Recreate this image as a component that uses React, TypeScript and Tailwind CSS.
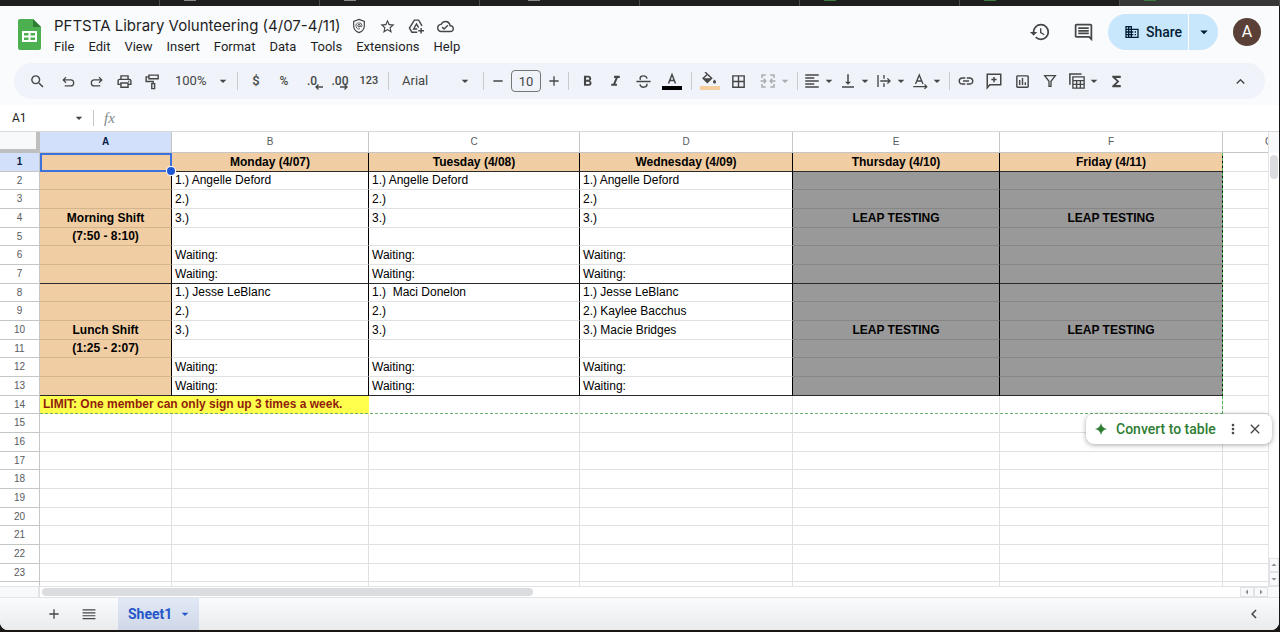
import type { ReactNode } from 'react';
import {
  MdAdd,
  MdArrowDropDown,
  MdArrowLeft,
  MdArrowRight,
  MdArrowDropUp,
  MdBorderAll,
  MdClose,
  MdDomain,
  MdFormatAlignLeft,
  MdFormatBold,
  MdFormatItalic,
  MdFunctions,
  MdHistory,
  MdKeyboardArrowLeft,
  MdKeyboardArrowUp,
  MdLink,
  MdMoreVert,
  MdOutlineCloudDone,
  MdOutlineInsertComment,
  MdOutlineInsertChart,
  MdOutlinePrint,
  MdRemove,
  MdSearch,
  MdStarBorder,
  MdVerticalAlignBottom,
} from 'react-icons/md';

const tabs = [
  { tone: '', mark: '' },
  { tone: '', mark: 'ml-6 bg-[#8a8a8a]' },
  { tone: '', mark: 'ml-6 bg-[#8a8a8a]' },
  { tone: '', mark: 'ml-12 bg-[#8a8a8a]' },
  { tone: '', mark: '' },
  { tone: '', mark: 'ml-6 bg-[#3c7a40]' },
  { tone: '', mark: 'ml-6 bg-[#3c7a40]' },
  { tone: 'bg-[#373737]', mark: 'ml-6 bg-[#3c7a40]' },
];

const menus = ['File', 'Edit', 'View', 'Insert', 'Format', 'Data', 'Tools', 'Extensions', 'Help'];

const columns = [
  { id: 'A', width: 'w-[132px]' },
  { id: 'B', width: 'w-[197px]' },
  { id: 'C', width: 'w-[211px]' },
  { id: 'D', width: 'w-[213px]' },
  { id: 'E', width: 'w-[207px]' },
  { id: 'F', width: 'w-[223px]' },
  { id: 'G', width: 'w-[93px]' },
];

const cells: string[][] = [
  ['', 'Monday (4/07)', 'Tuesday (4/08)', 'Wednesday (4/09)', 'Thursday (4/10)', 'Friday (4/11)', ''],
  ['', '1.) Angelle Deford', '1.) Angelle Deford', '1.) Angelle Deford', '', '', ''],
  ['', '2.)', '2.)', '2.)', '', '', ''],
  ['Morning Shift', '3.)', '3.)', '3.)', 'LEAP TESTING', 'LEAP TESTING', ''],
  ['(7:50 - 8:10)', '', '', '', '', '', ''],
  ['', 'Waiting:', 'Waiting:', 'Waiting:', '', '', ''],
  ['', 'Waiting:', 'Waiting:', 'Waiting:', '', '', ''],
  ['', '1.) Jesse LeBlanc', '1.)  Maci Donelon', '1.) Jesse LeBlanc', '', '', ''],
  ['', '2.)', '2.)', '2.) Kaylee Bacchus', '', '', ''],
  ['Lunch Shift', '3.)', '3.)', '3.) Macie Bridges', 'LEAP TESTING', 'LEAP TESTING', ''],
  ['(1:25 - 2:07)', '', '', '', '', '', ''],
  ['', 'Waiting:', 'Waiting:', 'Waiting:', '', '', ''],
  ['', 'Waiting:', 'Waiting:', 'Waiting:', '', '', ''],
  ['LIMIT: One member can only sign up 3 times a week.', '', '', '', '', '', ''],
];

const rowNumbers = Array.from({ length: 23 }, (_, i) => i + 1);

function Svg({ children, size = 'size-[18px]' }: { children: ReactNode; size?: string }) {
  return (
    <svg viewBox="0 0 24 24" className={size} fill="none" stroke="currentColor" strokeWidth="2" aria-hidden="true">
      {children}
    </svg>
  );
}

function Tool({ label, width = 'w-7', children }: { label: string; width?: string; children: ReactNode }) {
  return (
    <button type="button" aria-label={label} className={`flex h-7 shrink-0 items-center justify-center ${width}`}>
      {children}
    </button>
  );
}

function Combo({ label, muted, children }: { label: string; muted?: boolean; children: ReactNode }) {
  return (
    <button
      type="button"
      aria-label={label}
      className={`flex h-7 w-[34px] shrink-0 items-center ${muted ? 'text-[#a9acb0]' : ''}`}
    >
      {children}
      <MdArrowDropDown className="size-4 shrink-0" />
    </button>
  );
}

function Divider() {
  return <span className="mx-1 h-[18px] w-px shrink-0 bg-[#c7cacf]" />;
}

function BrowserStrip() {
  return (
    <div className="flex h-1.5 shrink-0 bg-[#1e1e1e]">
      {tabs.map((tab, i) => (
        <div key={i} className={`flex-1 border-r border-[#4a4a4a] ${tab.tone}`}>
          {tab.mark && <div className={`h-px w-3 ${tab.mark}`} />}
        </div>
      ))}
    </div>
  );
}

function Header() {
  return (
    <header className="flex h-[57px] shrink-0 items-start px-[18px]">
      <svg viewBox="0 0 23 31" className="mt-[13px] h-[31px] w-[23px] shrink-0" aria-hidden="true">
        <path d="M2 0h13l8 8v21a2 2 0 0 1-2 2H2a2 2 0 0 1-2-2V2a2 2 0 0 1 2-2z" fill="#4caf50" />
        <path d="M15 0l8 8h-8z" fill="#2e7d32" />
        <path
          d="M4 12h15v11H4zM6 14v2.600h4.500V14zM12.500 14v2.600H17V14zM6 18.400V21h4.500v-2.600zM12.500 18.400V21H17v-2.600z"
          fill="#fff"
          fillRule="evenodd"
        />
      </svg>
      <div className="ml-[13px] flex flex-col pt-2">
        <div className="flex h-6 items-center">
          <h1 className="w-[282px] font-[Inter,sans-serif] text-[15px] leading-6 whitespace-nowrap text-[#1f1f1f]">
            PFTSTA Library Volunteering (4/07-4/11)
          </h1>
          <div className="ml-[15px] flex items-center gap-3 text-[#444746]">
            <button type="button" aria-label="Confidentiality">
              <Svg size="size-4">
                <path d="M12 2l8 3v6.500c0 5-3.400 8.800-8 10.500-4.600-1.700-8-5.500-8-10.500V5z" strokeWidth="1.800" />
                <circle cx="12" cy="11.500" r="1.800" strokeWidth="1.500" />
                <path d="M13.800 11.500c0 2.400 2.700 2.200 2.700 0A4.500 4.500 0 1 0 13.500 16" strokeWidth="1.300" />
              </Svg>
            </button>
            <button type="button" aria-label="Star">
              <MdStarBorder className="size-[17px]" />
            </button>
            <button type="button" aria-label="Add to Drive">
              <Svg size="size-[17px]">
                <path d="M13 20H5.500L2 14.200 9 3h6l4.800 8" />
                <path d="M13 15.500H8L12 8.500l3 5M18.500 14v8M14.500 18h8" />
              </Svg>
            </button>
            <button type="button" aria-label="Saved to Drive">
              <MdOutlineCloudDone className="size-[17px]" />
            </button>
          </div>
        </div>
        <nav className="flex h-[17px] items-center gap-[14px] text-[13px] leading-4 text-[#1f1f1f]">
          {menus.map((m) => (
            <button key={m} type="button">
              {m}
            </button>
          ))}
        </nav>
      </div>
      <div className="ml-auto flex items-center pt-2 text-[#444746]">
        <button type="button" aria-label="Version history">
          <MdHistory className="size-[22px]" />
        </button>
        <button type="button" aria-label="Comments" className="ml-[22px]">
          <MdOutlineInsertComment className="size-[21px]" />
        </button>
        <div className="ml-[14px] flex h-9 overflow-hidden rounded-full bg-[#c8e6fc] text-[#001d35]">
          <button type="button" className="flex w-20 items-center gap-1.5 pl-4 text-[14px] font-medium">
            <MdDomain className="size-4" />
            Share
          </button>
          <button
            type="button"
            aria-label="Sharing options"
            className="flex w-[30px] items-center justify-center border-l border-white"
          >
            <MdArrowDropDown className="size-[18px]" />
          </button>
        </div>
        <button
          type="button"
          aria-label="Account"
          className="ml-[15px] flex size-7 items-center justify-center rounded-full bg-[#5b4037] text-[16px] text-white"
        >
          A
        </button>
      </div>
    </header>
  );
}

function Toolbar() {
  return (
    <div className="mx-[14px] flex h-9 shrink-0 items-center rounded-full bg-[#f0f3f9] pr-[11px] pl-[9px] text-[#444746]">
      <Tool label="Search the menus">
        <MdSearch className="size-[17px]" />
      </Tool>
      <div className="ml-[3px] flex">
        <Tool label="Undo">
          <Svg size="size-[15px]">
            <path d="M8 5L3.500 9.500 8 14M4 9.500h11.500a4.800 4.800 0 0 1 0 9.600H6" />
          </Svg>
        </Tool>
        <Tool label="Redo">
          <Svg size="size-[15px]">
            <path d="M16 5l4.500 4.500L16 14M20 9.500H8.500a4.800 4.800 0 0 0 0 9.600H18" />
          </Svg>
        </Tool>
        <Tool label="Print">
          <MdOutlinePrint className="size-[17px]" />
        </Tool>
        <Tool label="Paint format">
          <Svg size="size-[17px]">
            <path d="M7 3h13v5H7zM7 5.500H3V12h10v3M11 15h4v7h-4z" />
          </Svg>
        </Tool>
      </div>
      <button type="button" className="flex h-7 w-[67px] shrink-0 items-center justify-between pr-0.5 pl-[9px] text-[13px]">
        100%
        <MdArrowDropDown className="size-4" />
      </button>
      <Divider />
      <Tool label="Format as currency">
        <span className="text-[13px] font-medium">$</span>
      </Tool>
      <Tool label="Format as percent">
        <span className="text-[12px] font-medium">%</span>
      </Tool>
      <Tool label="Decrease decimal places">
        <span className="relative text-[12px] font-medium">
          .0
          <svg viewBox="0 0 8 6" className="absolute top-3 left-2 h-1.5 w-2" fill="none" stroke="currentColor" strokeWidth="1.300">
            <path d="M8 3H1M3.500 .5L1 3l2.500 2.500" />
          </svg>
        </span>
      </Tool>
      <Tool label="Increase decimal places">
        <span className="relative text-[12px] font-medium">
          .00
          <svg viewBox="0 0 8 6" className="absolute top-3 left-2 h-1.5 w-2" fill="none" stroke="currentColor" strokeWidth="1.300">
            <path d="M0 3h7M4.500 .5L7 3 4.500 5.500" />
          </svg>
        </span>
      </Tool>
      <Tool label="More formats" width="w-[30px]">
        <span className="text-[11px] font-medium">123</span>
      </Tool>
      <Divider />
      <button type="button" className="flex h-7 w-[86px] shrink-0 items-center justify-between pr-1.5 pl-[9px] text-[13px]">
        Arial
        <MdArrowDropDown className="size-4" />
      </button>
      <Divider />
      <Tool label="Decrease font size" width="w-5">
        <MdRemove className="size-4" />
      </Tool>
      <input
        aria-label="Font size"
        defaultValue="10"
        className="mx-[3px] h-[22px] w-[30px] shrink-0 rounded border border-[#747775] bg-transparent text-center text-[13px]"
      />
      <Tool label="Increase font size" width="w-5">
        <MdAdd className="size-4" />
      </Tool>
      <Divider />
      <Tool label="Bold">
        <MdFormatBold className="size-[17px]" />
      </Tool>
      <Tool label="Italic">
        <MdFormatItalic className="size-[17px]" />
      </Tool>
      <Tool label="Strikethrough">
        <Svg size="size-[17px]">
          <path d="M2 12h20M17 8c-.5-2.500-2.300-4-5-4-2.900 0-4.800 1.500-4.800 3.600 0 .8.300 1.400.8 1.900M7 16c.5 2.500 2.300 4 5 4 2.900 0 4.900-1.500 4.900-3.600 0-.5-.1-.9-.3-1.300" />
        </Svg>
      </Tool>
      <Tool label="Text color" width="w-[30px]">
        <svg viewBox="0 0 20 18" className="h-[18px] w-5" aria-hidden="true">
          <path d="M6.500 11.500L10 2.500l3.500 9M7.800 8.500h4.400" fill="none" stroke="currentColor" strokeWidth="1.500" />
          <path d="M0 14h20v4H0z" fill="#000" />
        </svg>
      </Tool>
      <Divider />
      <Tool label="Fill color">
        <svg viewBox="0 0 20 18" className="h-[18px] w-5" aria-hidden="true">
          <path d="M5 0l6.700 6.200-4.400 4.400-4.200-4.300L7.500 2.300" fill="none" stroke="currentColor" strokeWidth="1.400" />
          <path d="M3.200 6.300h8.400l-4.300 4.300z" fill="currentColor" />
          <path d="M14.500 7.500c1 1.200 1.500 1.900 1.500 2.500a1.500 1.500 0 0 1-3 0c0-.6.500-1.300 1.500-2.500z" fill="currentColor" />
          <path d="M0 14h20v4H0z" fill="#f6ce9d" />
        </svg>
      </Tool>
      <Tool label="Borders">
        <MdBorderAll className="size-[17px]" />
      </Tool>
      <div className="ml-[7px] flex">
        <Combo label="Merge cells" muted>
          <Svg>
            <path d="M9 4H4v4M4 16v4h5M15 4h5v4M20 16v4h-5M2 12h7M6.500 9L9 12l-2.500 3M22 12h-7M17.500 9L15 12l2.500 3" />
          </Svg>
        </Combo>
      </div>
      <Divider />
      <div className="ml-px flex gap-0.5">
        <Combo label="Horizontal align">
          <MdFormatAlignLeft className="size-[18px]" />
        </Combo>
        <Combo label="Vertical align">
          <MdVerticalAlignBottom className="size-[18px]" />
        </Combo>
        <Combo label="Text wrapping">
          <Svg>
            <path d="M4 4v16M12 4v5M12 15v5M7 12h13M16.500 8.500L20 12l-3.500 3.500" strokeWidth="1.800" />
          </Svg>
        </Combo>
        <Combo label="Text rotation">
          <Svg>
            <path d="M6 16l5-12 5 12M8 12h6M3 19.500h17M18 16.500l3 3-3 3" strokeWidth="1.800" />
          </Svg>
        </Combo>
      </div>
      <Divider />
      <div className="flex gap-1">
        <Tool label="Insert link" width="w-6">
          <MdLink className="size-[18px]" />
        </Tool>
        <Tool label="Insert comment" width="w-6">
          <Svg>
            <path d="M3 21V3h18v14H6.500zM12 6.500v7M8.500 10h7" />
          </Svg>
        </Tool>
        <Tool label="Insert chart" width="w-6">
          <MdOutlineInsertChart className="size-[17px]" />
        </Tool>
        <Tool label="Create a filter" width="w-6">
          <Svg size="size-4">
            <path d="M4 4h16l-6.500 8.500V20h-3v-7.500z" />
          </Svg>
        </Tool>
      </div>
      <div className="ml-1.5 flex">
        <Combo label="Table views">
          <Svg>
            <path d="M2.500 17V2.500H18" />
            <path d="M6.500 6.500h15v15h-15zM6.500 11.500h15M6.500 16.500h15M11.500 11.500v10M16.500 11.500v10" strokeWidth="1.800" />
          </Svg>
        </Combo>
      </div>
      <div className="ml-0.5 flex">
        <Tool label="Functions" width="w-6">
          <MdFunctions className="size-[17px]" />
        </Tool>
      </div>
      <div className="ml-auto">
        <Tool label="Hide the menus">
          <MdKeyboardArrowUp className="size-[17px]" />
        </Tool>
      </div>
    </div>
  );
}

function FormulaBar() {
  return (
    <div className="mt-1.5 flex h-[27px] shrink-0 items-center border-b border-[#d5d7da] bg-white text-[#1f1f1f]">
      <input aria-label="Name box" defaultValue="A1" className="w-[60px] bg-transparent pl-3 text-[12px]" />
      <button type="button" aria-label="Named ranges" className="ml-[11px] text-[#444746]">
        <MdArrowDropDown className="size-4" />
      </button>
      <span className="ml-1.5 h-4 w-px bg-[#c7c7c7]" />
      <span className="ml-2.5 font-['Liberation_Serif',serif] text-[15px] text-[#80868b] italic">fx</span>
      <input aria-label="Formula" className="ml-2 h-5 min-w-0 flex-1 bg-transparent text-[12px] outline-none" />
    </div>
  );
}

function cellStyle(row: number, col: number) {
  const inTable = row <= 13 && col <= 5;
  const classes = ['relative whitespace-pre border-r border-b px-[3px] py-0 leading-[17px]'];

  if (row === 14 && col === 0) classes.push('bg-[#ffff4d] font-bold text-[#8f1d0c]');
  else if (inTable && (row === 1 || col === 0)) classes.push('bg-[#f0cda2] text-center font-bold');
  else if (inTable && col >= 4) classes.push('bg-[#999999] text-center font-bold');

  if (inTable) classes.push('border-r-black');
  else if (row === 14 && col === 0) classes.push('border-r-transparent');
  else classes.push('border-r-black/12');

  if (inTable && (row === 1 || row === 7 || row === 13)) classes.push('border-b-[#2b2b2b]');
  else if (row === 14 && col <= 5) classes.push('border-b-transparent');
  else classes.push('border-b-black/12');

  return classes.join(' ');
}

function Grid() {
  return (
    <table className="w-[1316px] table-fixed border-separate border-spacing-0 font-['Liberation_Sans',Arial,sans-serif] text-[12px] text-black">
      <thead>
        <tr className="h-[21px]">
          <th className="w-10 border-r-4 border-b-4 border-[#bfbfbf] bg-[#f8f9fa] p-0" aria-label="Select all" />
          {columns.map((c) => (
            <th
              key={c.id}
              scope="col"
              className={`${c.width} border-r border-b border-[#c4c7c5] p-0 text-[10px] leading-4 ${
                c.id === 'A' ? 'bg-[#d3e0fb] font-bold text-[#041e49]' : 'bg-white font-normal text-[#575b5f]'
              }`}
            >
              {c.id}
            </th>
          ))}
        </tr>
      </thead>
      <tbody>
        {rowNumbers.map((n) => (
          <tr key={n} className={n % 3 === 2 ? 'h-[18px]' : 'h-[19px]'}>
            <th
              scope="row"
              className={`border-r border-b border-[#c4c7c5] p-0 text-[10px] leading-4 ${
                n === 1 ? 'bg-[#d3e0fb] font-bold text-[#041e49]' : 'bg-white font-normal text-[#575b5f]'
              }`}
            >
              {n}
            </th>
            {columns.map((c, col) => {
              // the note in A14 runs over B14
              if (n === 14 && col === 1) return null;
              return (
                <td key={c.id} colSpan={n === 14 && col === 0 ? 2 : 1} className={cellStyle(n, col)}>
                  {cells[n - 1]?.[col]}
                  {n === 1 && col === 0 && (
                    <span className="absolute top-0 -right-px -bottom-px left-0 z-10 border-2 border-[#3b70dd]">
                      <span className="absolute -right-[5px] -bottom-[5px] size-2 rounded-full bg-[#1a56d6] ring-1 ring-white" />
                    </span>
                  )}
                  {n === 1 && col === 5 && (
                    <span className="absolute top-0 -right-px z-10 h-[261px] w-px border-r border-dashed border-[#4caf50]" />
                  )}
                  {n === 14 && col === 0 && (
                    <span className="absolute -bottom-px left-0 z-10 w-[1183px] border-b border-dashed border-[#6db272]" />
                  )}
                </td>
              );
            })}
          </tr>
        ))}
        <tr className="h-[19px]">
          <td className="border-r border-[#c4c7c5]" />
          {columns.map((c) => (
            <td key={c.id} className="border-r border-black/12" />
          ))}
        </tr>
      </tbody>
    </table>
  );
}

function ConvertChip() {
  return (
    <div className="absolute top-[282px] right-[7px] z-20 flex h-[30px] w-[186px] items-center rounded-lg bg-white pl-2 shadow-[0_1px_5px_rgba(0,0,0,0.35)]">
      <button type="button" className="flex items-center gap-2 text-[14px] font-medium whitespace-nowrap text-[#2e7d32]">
        <svg viewBox="0 0 14 14" className="size-[14px]" fill="currentColor" aria-hidden="true">
          <path d="M7 1c.7 3.600 2.400 5.300 6 6-3.600.7-5.300 2.400-6 6-.7-3.600-2.400-5.300-6-6 3.600-.7 5.300-2.400 6-6z" />
        </svg>
        Convert to table
      </button>
      <div className="ml-auto flex items-center gap-1.5 pr-[9px] text-[#444746]">
        <button type="button" aria-label="More options">
          <MdMoreVert className="size-4" />
        </button>
        <button type="button" aria-label="Close">
          <MdClose className="size-4" />
        </button>
      </div>
    </div>
  );
}

function ScrollButton({ label, children }: { label: string; children: ReactNode }) {
  return (
    <button
      type="button"
      aria-label={label}
      className="flex min-h-0 min-w-0 items-center justify-center overflow-hidden border border-[#e1e3e6] bg-[#f8f9fa] text-[#8a8d90]"
    >
      {children}
    </button>
  );
}

function SheetTabs() {
  return (
    <footer className="flex h-8 shrink-0 items-stretch bg-linear-to-b from-[#f9fbfd] to-[#e9ebed] text-[#444746]">
      <button type="button" aria-label="Add sheet" className="ml-10 flex w-7 items-center justify-center">
        <MdAdd className="size-4" />
      </button>
      <button type="button" aria-label="All sheets" className="ml-[7px] flex w-7 items-center justify-center">
        <Svg size="size-[14px]">
          <path d="M1 5h22M1 10h22M1 15h22M1 20h22" />
        </Svg>
      </button>
      <button
        type="button"
        className="ml-[15px] flex w-[81px] items-center justify-between bg-linear-to-b from-[#e1e9f7] to-[#d0d8e8] pr-1.5 pl-2.5 text-[14px] font-bold text-[#2456c8]"
      >
        Sheet1
        <MdArrowDropDown className="size-4" />
      </button>
      <button type="button" aria-label="Show side panel" className="mr-4 ml-auto">
        <MdKeyboardArrowLeft className="size-[18px]" />
      </button>
    </footer>
  );
}

export default function App() {
  return (
    <div className="flex h-screen flex-col bg-[#191715] font-[Roboto,'Liberation_Sans',sans-serif]">
      <BrowserStrip />
      <div className="mr-px mb-0.5 flex min-h-0 flex-1 flex-col overflow-hidden rounded-b-lg bg-[#f9fbfd]">
        <Header />
        <Toolbar />
        <FormulaBar />
        <main className="relative flex min-h-0 flex-1 bg-white">
          <div className="min-w-0 flex-1 overflow-hidden">
            <Grid />
          </div>
          <div className="flex w-[11px] shrink-0 flex-col border-l border-[#e1e3e6] bg-white">
            <div className="h-[21px] shrink-0 bg-[#f8f9fa]" />
            <div className="mx-px mt-0.5 h-6 rounded-full bg-[#dadce0]" />
            <div className="mt-auto grid h-7 grid-rows-2">
              <ScrollButton label="Scroll up">
                <MdArrowDropUp className="size-3 shrink-0" />
              </ScrollButton>
              <ScrollButton label="Scroll down">
                <MdArrowDropDown className="size-3 shrink-0" />
              </ScrollButton>
            </div>
          </div>
          <ConvertChip />
        </main>
        <div className="flex h-3 shrink-0 border-y border-[#e1e3e6] bg-white">
          <div className="w-10 border-r-2 border-[#e1e3e6] bg-[#f8f9fa]" />
          <div className="flex flex-1 items-center pl-0.5">
            <div className="h-2 w-[41%] rounded-full bg-[#dadce0]" />
          </div>
          <div className="grid w-7 grid-cols-2">
            <ScrollButton label="Scroll left">
              <MdArrowLeft className="size-3 shrink-0" />
            </ScrollButton>
            <ScrollButton label="Scroll right">
              <MdArrowRight className="size-3 shrink-0" />
            </ScrollButton>
          </div>
          <div className="w-[11px] bg-[#f8f9fa]" />
        </div>
        <SheetTabs />
      </div>
    </div>
  );
}
